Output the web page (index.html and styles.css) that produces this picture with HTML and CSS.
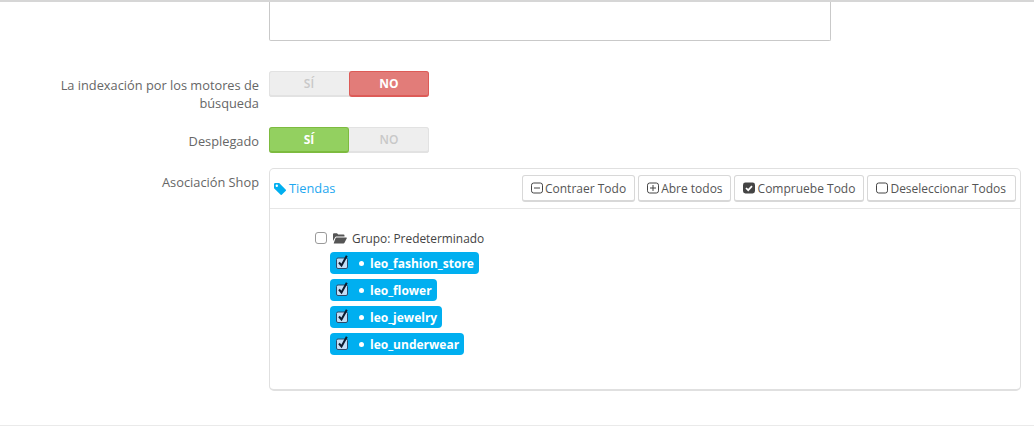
FILE: index.html
```html
<!DOCTYPE html>
<html lang="es">
<head>
<meta charset="utf-8">
<title>Tiendas</title>
<link rel="stylesheet" href="styles.css">
</head>
<body>
<div class="page">
  <div class="top-row"><div class="textarea"></div></div>
  <div class="row row-index">
    <label class="label">La indexación por los motores de búsqueda</label>
    <div class="toggle"><span class="opt">SÍ</span><span class="opt on-no">NO</span></div>
  </div>
  <div class="row row-display">
    <label class="label">Desplegado</label>
    <div class="toggle"><span class="opt on-yes">SÍ</span><span class="opt">NO</span></div>
  </div>
  <div class="row row-shop">
    <label class="label">Asociación Shop</label>
    <div class="panel">
      <div class="panel-head">
        <div class="title">
          <svg class="tag" viewBox="0 0 12 12" width="12" height="12"><path fill="#00aff0" fill-rule="evenodd" d="M0 1.2A1.2 1.2 0 0 1 1.2 0H5.2L11.6 6.4A1.1 1.1 0 0 1 11.6 8L8 11.6A1.1 1.1 0 0 1 6.4 11.6L0 5.2ZM2.8 1.6A1.2 1.2 0 1 0 2.8 4 1.2 1.2 0 0 0 2.8 1.6Z"/></svg>
          <span>Tiendas</span>
        </div>
        <div class="actions">
          <button class="btn"><svg class="ic" viewBox="0 0 12 12" width="12" height="12"><rect x=".5" y="1" width="11" height="10" rx="2.2" fill="none" stroke="#444"/><path d="M3 6h6" stroke="#444"/></svg>Contraer Todo</button>
          <button class="btn btn-abre"><svg class="ic" viewBox="0 0 12 12" width="12" height="12"><rect x=".5" y="1" width="11" height="10" rx="2.2" fill="none" stroke="#444"/><path d="M3 6h6M6 3v6" stroke="#444"/></svg>Abre todos</button>
          <button class="btn btn-check"><svg class="ic" viewBox="0 0 12 12" width="12" height="12"><rect y=".5" width="12" height="11" rx="2.4" fill="#444"/><path d="M3 6l2.2 2.2L9 4.2" fill="none" stroke="#fff" stroke-width="1.7"/></svg>Compruebe Todo</button>
          <button class="btn btn-wide"><svg class="ic" viewBox="0 0 12 12" width="12" height="12"><rect x=".5" y="1" width="11" height="10" rx="2.2" fill="none" stroke="#444"/></svg>Deseleccionar Todos</button>
        </div>
      </div>
      <div class="tree">
        <div class="group">
          <span class="box"></span>
          <svg class="folder" viewBox="0 0 14 11" width="14" height="11"><path fill="#555" d="M0 1.2A1 1 0 0 1 1 .2H4L5.2 1.6H10.5A1 1 0 0 1 11.5 2.6V3.6H3.4A1.6 1.6 0 0 0 2 4.4L0 8ZM3.4 4.6H13.4A.5.5 0 0 1 13.8 5.3L11.5 9.8A1.4 1.4 0 0 1 10.4 10.6H1.2A.5.5 0 0 1 .8 9.9L2.6 5.1A1 1 0 0 1 3.4 4.6Z"/></svg>
          <span>Grupo: Predeterminado</span>
        </div>
        <ul class="shops">
          <li class="shop"><svg class="check" viewBox="0 0 13 14" width="13" height="14"><rect x=".5" y="3" width="11" height="10.5" rx="1.5" fill="#c3def5" stroke="#2b4a6b"/><path d="M3 7.5l2.5 3L10.8 .8" fill="none" stroke="#0c1b2e" stroke-width="2"/></svg><i class="dot"></i>leo_fashion_store</li>
          <li class="shop"><svg class="check" viewBox="0 0 13 14" width="13" height="14"><rect x=".5" y="3" width="11" height="10.5" rx="1.5" fill="#c3def5" stroke="#2b4a6b"/><path d="M3 7.5l2.5 3L10.8 .8" fill="none" stroke="#0c1b2e" stroke-width="2"/></svg><i class="dot"></i>leo_flower</li>
          <li class="shop"><svg class="check" viewBox="0 0 13 14" width="13" height="14"><rect x=".5" y="3" width="11" height="10.5" rx="1.5" fill="#c3def5" stroke="#2b4a6b"/><path d="M3 7.5l2.5 3L10.8 .8" fill="none" stroke="#0c1b2e" stroke-width="2"/></svg><i class="dot"></i>leo_jewelry</li>
          <li class="shop"><svg class="check" viewBox="0 0 13 14" width="13" height="14"><rect x=".5" y="3" width="11" height="10.5" rx="1.5" fill="#c3def5" stroke="#2b4a6b"/><path d="M3 7.5l2.5 3L10.8 .8" fill="none" stroke="#0c1b2e" stroke-width="2"/></svg><i class="dot"></i>leo_underwear</li>
        </ul>
      </div>
    </div>
  </div>
</div>
</body>
</html>
```
FILE: styles.css
```css
* { box-sizing: border-box; }
html, body { margin: 0; padding: 0; }
body { background: #fff; font-family: "Open Sans", sans-serif; font-size: 12px; color: #555; overflow: hidden; }
.page { width: 1034px; height: 426px; border-top: 2px solid #d6d6d6; border-bottom: 1px solid #eaeaea; padding-left: 269px; }
.top-row { height: 39px; margin-bottom: 30px; }
.textarea { width: 562px; height: 39px; border: 1px solid #c9c9c9; border-top: 0; border-radius: 0 0 2px 2px; }
.row { display: flex; gap: 10px; margin-left: -269px; }
.label { width: 259px; flex: none; padding: 5px 0 0 50px; text-align: right; font-size: 12.8px; line-height: 18px; color: #666; }
.row-index { height: 56px; }
.row-display { height: 41px; }
.toggle { display: flex; width: 160px; height: 26px; background: #eee; border-radius: 3px; box-shadow: inset 0 0 0 1px #e2e2e2, inset 0 -2px 0 #e2e2e2; }
.opt { flex: none; width: 80px; display: flex; align-items: center; justify-content: center; padding-bottom: 2px; font-size: 12px; font-weight: 600; color: #c8c8c8; border-radius: 3px; }
.on-no { background: #e27c79; border: 1px solid #dd5b57; border-bottom-width: 2px; color: #fff; font-weight: 700; padding-bottom: 0; }
.on-yes { background: #93d060; border: 1px solid #7dbb3f; border-bottom-width: 2px; color: #fff; font-weight: 700; padding-bottom: 0; }
.panel { width: 752px; height: 223px; border: 1px solid #e0e0e0; border-bottom-width: 2px; border-radius: 5px; }
.panel-head { height: 40px; display: flex; align-items: center; justify-content: space-between; border-bottom: 1px solid #e6e6e6; padding: 0 4px 0 4px; }
.title { display: flex; align-items: center; gap: 3px; color: #1ea7f0; font-size: 12.8px; padding-bottom: 1px; }
.tag { flex: none; margin-top: 1px; }
.actions { display: flex; gap: 3px; }
.btn { display: flex; align-items: center; gap: 2px; height: 27px; padding: 0 8px; background: #fff; border: 1px solid #d8d8d8; border-bottom-width: 2px; border-radius: 3px; font-family: "Open Sans", sans-serif; font-size: 12px; color: #555; }
.btn-abre { padding-right: 7px; }
.btn-check { gap: 3px; }
.btn-wide { padding-right: 9px; }
.ic { flex: none; }
.tree { padding: 19px 0 0 45px; }
.group { display: flex; align-items: center; height: 20px; font-size: 11.9px; color: #444; }
.box { width: 12px; height: 12px; margin-right: 6px; background: #fff; border: 1px solid #9a9a9a; border-radius: 3px; }
.folder { margin-right: 5px; }
.shops { list-style: none; margin: 4px 0 0 15px; padding: 0; display: flex; flex-direction: column; align-items: flex-start; gap: 5px; }
.shop { display: flex; align-items: center; height: 22px; padding: 0 5px 0 6px; background: #00aff0; border-radius: 4px; color: #fff; font-size: 12px; font-weight: 700; }
.check { flex: none; margin-right: 10px; margin-top: -2px; }
.dot { width: 5px; height: 5px; border-radius: 50%; background: #fff; margin-right: 6px; flex: none; }
```
